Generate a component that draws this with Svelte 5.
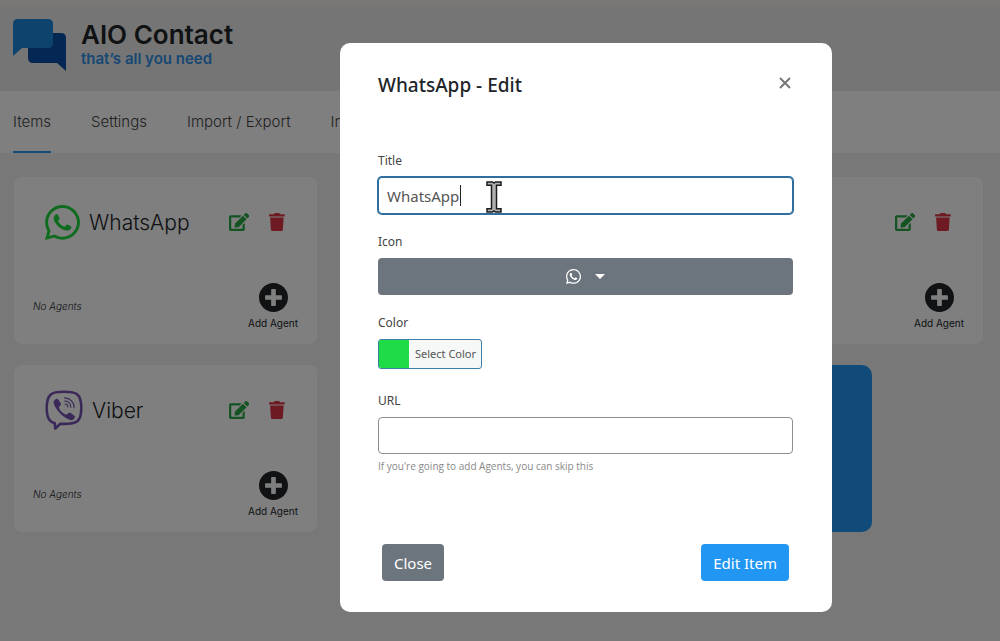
<script>
  const tabs = ["Items", "Settings", "Import / Export", "Info"];

  const items = [
    { title: "WhatsApp", icon: "whatsapp" },
    { title: "" },
    { title: "" },
    { title: "Viber", icon: "viber" },
    { title: "" },
  ];

  let activeTab = "Items";
  let open = true;
  let title = "WhatsApp";
  let url = "";
  let color = "#1fdb45";

  const close = () => (open = false);
</script>

{#snippet whatsapp()}
  <svg class="icon" viewBox="0 32 448 448" aria-hidden="true">
    <path d="M380.9 97.1C339 55.1 283.2 32 223.9 32c-122.4 0-222 99.6-222 222 0 39.1 10.2 77.3 29.6 111L0 480l117.7-30.9c32.4 17.7 68.9 27 106.1 27h.1c122.3 0 224.1-99.6 224.1-222 0-59.3-25.2-115-67.1-157zm-157 341.6c-33.2 0-65.7-8.9-94-25.7l-6.7-4-69.8 18.3L72 359.2l-4.4-7c-18.5-29.4-28.2-63.3-28.2-98.2 0-101.7 82.8-184.5 184.6-184.5 49.3 0 95.6 19.2 130.4 54.1 34.8 34.9 56.2 81.2 56.1 130.5 0 101.8-84.9 184.6-186.6 184.6zm101.2-138.2c-5.5-2.8-32.8-16.2-37.9-18-5.1-1.9-8.8-2.8-12.5 2.8-3.7 5.6-14.3 18-17.6 21.8-3.2 3.7-6.5 4.2-12 1.4-32.6-16.3-54-29.1-75.5-66-5.7-9.8 5.7-9.1 16.3-30.3 1.8-3.7.9-6.9-.5-9.7-1.4-2.8-12.5-30.1-17.1-41.2-4.5-10.8-9.1-9.3-12.5-9.5-3.2-.2-6.9-.2-10.6-.2-3.7 0-9.7 1.4-14.8 6.9-5.1 5.6-19.4 19-19.4 46.3 0 27.3 19.9 53.7 22.6 57.4 2.8 3.7 39.1 59.7 94.8 83.8 35.2 15.2 49 16.5 66.6 13.9 10.7-1.6 32.8-13.4 37.4-26.4 4.6-13 4.6-24.1 3.2-26.4-1.3-2.5-5-3.9-10.5-6.6z" />
  </svg>
{/snippet}

<main>
  <header>
    <svg class="logo" viewBox="0 0 54 54" aria-hidden="true">
      <path fill="#0a4fa8" d="M20 15h28q5 0 5 5v33l-9-8H20q-5 0-5-5V20q0-5 5-5z" />
      <path fill="#1b87d8" d="M5 1h30q5 0 5 5v19q0 5-5 5H9l-9 8V6q0-5 5-5z" />
    </svg>
    <div>
      <h1>AIO Contact</h1>
      <p>that’s all you need</p>
    </div>
  </header>

  <nav>
    {#each tabs as tab}
      <button class="tab" class:active={tab === activeTab} on:click={() => (activeTab = tab)}>{tab}</button>
    {/each}
  </nav>

  <section class="grid">
    {#each items as item}
      <article class="card">
        <div class="top">
          {#if item.icon === "whatsapp"}
            <span class="brand green">{@render whatsapp()}</span>
          {:else if item.icon === "viber"}
            <svg class="viber" viewBox="0 0 38 40" aria-hidden="true">
              <path fill="none" stroke="#7450b0" stroke-width="2.6" stroke-linejoin="round" d="M19 1.8c-6 0-10.6.4-13.2 2.6C2.6 7 1.7 11 1.7 18c0 7 1 11 4 13.3 1.2 1 2.5 1.5 4 1.8l.6 5.4 5-4.7c1.2.1 2.4.1 3.7.1 6 0 10.7-.5 13.4-2.7 3-2.4 3.9-6.4 3.9-13.2s-.9-11-4-13.5C29.6 2.3 25 1.8 19 1.8z" />
              <path fill="#7450b0" d="M10.5 9.3c1-.8 2.1-.5 2.9.5l2.2 3.1c.7 1.1.5 2-.4 2.7-1.3 1-1.4 1.7-.9 2.9 1.2 2.7 3.3 4.7 6 5.9 1.1.4 1.8.2 2.6-.8.8-1 1.8-1.2 2.9-.5l3.2 2.3c1.1.8 1.2 1.9.4 2.9-1.2 1.6-2.6 2.3-4.3 1.6C17.5 26.8 11.8 21 8.8 13.7c-.6-1.7.1-3.2 1.7-4.4z" />
              <path fill="none" stroke="#7450b0" stroke-width="1.2" stroke-linecap="round" d="M19.5 7.8c5.6.2 9.5 4 9.6 9.8M19.8 11c3.7.3 5.9 2.5 6.1 6.2M20.2 14c1.6.2 2.5 1.2 2.7 2.8" />
            </svg>
          {/if}
          <h2>{item.title}</h2>
          <button class="action edit" aria-label="Edit">
            <svg viewBox="0 0 576 512">
              <path d="M402.6 83.2l90.2 90.2c3.8 3.8 3.8 10 0 13.8L274.4 405.6l-92.8 10.3c-12.4 1.4-22.9-9.1-21.5-21.5l10.3-92.8L388.8 83.2c3.8-3.8 10-3.8 13.8 0zm162-22.9l-48.8-48.8c-15.2-15.2-39.9-15.2-55.2 0l-35.4 35.4c-3.8 3.8-3.8 10 0 13.8l90.2 90.2c3.8 3.8 10 3.8 13.8 0l35.4-35.4c15.2-15.3 15.2-40 0-55.2zM384 346.2V448H64V128h229.8c3.2 0 6.2-1.3 8.5-3.5l40-40c7.6-7.6 2.2-20.5-8.5-20.5H48C21.5 64 0 85.5 0 112v352c0 26.5 21.5 48 48 48h352c26.5 0 48-21.5 48-48V306.2c0-10.7-12.9-16-20.5-8.5l-40 40c-2.2 2.3-3.5 5.3-3.5 8.5z" />
            </svg>
          </button>
          <button class="action delete" aria-label="Delete">
            <svg viewBox="0 0 448 512">
              <path d="M432 32H312l-9.4-18.7A24 24 0 0 0 281.1 0H166.8a23.7 23.7 0 0 0-21.4 13.3L136 32H16A16 16 0 0 0 0 48v32a16 16 0 0 0 16 16h416a16 16 0 0 0 16-16V48a16 16 0 0 0-16-16zM32 128l21.2 339a48 48 0 0 0 47.9 45h245.8a48 48 0 0 0 47.9-45L416 128z" />
            </svg>
          </button>
        </div>
        <div class="bottom">
          <em>No Agents</em>
          <button class="add">
            <svg viewBox="8 8 496 496" aria-hidden="true">
              <path d="M256 8C119 8 8 119 8 256s111 248 248 248 248-111 248-248S393 8 256 8zm144 276c0 6.6-5.4 12-12 12h-92v92c0 6.6-5.4 12-12 12h-56c-6.6 0-12-5.4-12-12v-92h-92c-6.6 0-12-5.4-12-12v-56c0-6.6 5.4-12 12-12h92v-92c0-6.6 5.4-12 12-12h56c6.6 0 12 5.4 12 12v92h92c6.6 0 12 5.4 12 12v56z" />
            </svg>
            Add Agent
          </button>
        </div>
      </article>
    {/each}
    <button class="new" aria-label="Add item"></button>
  </section>
</main>

{#if open}
  <div class="backdrop">
    <form class="modal" role="dialog" aria-labelledby="modal-title" on:submit|preventDefault={close}>
      <div class="modal-header">
        <h3 id="modal-title">{title} - Edit</h3>
        <button type="button" class="x" aria-label="Dismiss" on:click={close}>
          <svg viewBox="0 0 12 12"><path d="M1 1l10 10m0-10l-10 10" /></svg>
        </button>
      </div>

      <div class="field">
        <label for="title">Title</label>
        <div class="input-wrap">
          <input id="title" class="input focused" type="text" bind:value={title} />
          <span class="caret"></span>
          <!-- text pointer -->
          <svg class="pointer" viewBox="0 0 16 32" aria-hidden="true">
            <path fill="#b0b0b0" stroke="#1c1c1c" stroke-width="1.5" d="M1 1h5.5L8 2l1.5-1H15v3.2h-4.500v23.600H15V31H9.500L8 30l-1.500 1H1v-3.200h4.500V4.200H1z" />
          </svg>
        </div>
      </div>

      <div class="field">
        <label for="icon">Icon</label>
        <button type="button" id="icon" class="dropdown" aria-label="WhatsApp icon">
          {@render whatsapp()}
          <span class="arrow"></span>
        </button>
      </div>

      <div class="field color">
        <label for="color">Color</label>
        <button type="button" id="color" class="picker">
          <span class="swatch" style="background: {color}"></span>
          <span class="picker-text">Select Color</span>
        </button>
      </div>

      <div class="field">
        <label for="url">URL</label>
        <input id="url" class="input" type="text" bind:value={url} />
        <small>If you're going to add Agents, you can skip this</small>
      </div>

      <div class="modal-footer">
        <button type="button" class="btn" on:click={close}>Close</button>
        <button type="submit" class="btn primary">Edit Item</button>
      </div>
    </form>
  </div>
{/if}

<style>
  :global(body) {
    background: #f0f0f0;
  }

  * {
    box-sizing: border-box;
  }

  button {
    border: none;
    padding: 0;
    background: none;
    font-family: inherit;
    cursor: pointer;
  }

  svg {
    display: block;
    fill: currentColor;
  }

  main {
    min-height: 100vh;
    background: #f0f0f0;
    color: #212529;
    font-family: Inter, "Open Sans", sans-serif;
  }

  /* HEADER */
  header {
    display: flex;
    gap: 14px;
    height: 91px;
    padding: 18px 13px 0;
    background: linear-gradient(#f6efe8, #ebebeb 12px);
  }

  .logo {
    width: 54px;
    height: 54px;
  }

  h1 {
    margin: 3px 0 0;
    font-size: 26px;
    line-height: 28px;
    font-weight: 600;
  }

  header p {
    margin: 0;
    color: #2f8fe6;
    font-size: 15px;
    line-height: 20px;
    font-weight: 600;
  }

  nav {
    display: flex;
    gap: 40px;
    height: 62px;
    padding: 0 13px;
    background: white;
  }

  .tab {
    border-bottom: 2px solid transparent;
    color: #444;
    font-size: 15px;
    font-weight: 300;
    white-space: nowrap;
  }

  .tab.active {
    border-color: #2196f3;
  }

  /* CARDS */
  .grid {
    display: grid;
    grid-template-columns: repeat(3, 1fr);
    gap: 21px 30px;
    padding: 24px 17px 24px 14px;
  }

  .card {
    height: 167px;
    border-radius: 8px;
    background: white;
  }

  .top {
    display: flex;
    align-items: center;
    height: 91px;
    margin: 0 32px 0 31px;
    border-bottom: 1px solid #fafafa;
  }

  .brand {
    width: 35px;
  }

  .green {
    color: #1fd93f;
  }

  .icon {
    width: 100%;
  }

  .viber {
    width: 38px;
    height: 40px;
  }

  h2 {
    flex: 1;
    margin: 0 0 0 9px;
    font-size: 21px;
    font-weight: 300;
  }

  .action {
    margin-left: 20px;
  }

  .action svg {
    height: 18px;
  }

  .edit {
    color: #28a745;
  }

  .delete {
    color: #dc3545;
  }

  .bottom {
    display: flex;
    justify-content: space-between;
    align-items: center;
    height: 76px;
    padding: 0 19px;
    font-size: 10px;
  }

  em {
    font-weight: 300;
  }

  .add {
    display: flex;
    flex-direction: column;
    align-items: center;
    gap: 5px;
    color: #212529;
    font-size: 10px;
    line-height: 12px;
  }

  .add svg {
    width: 29px;
    height: 29px;
  }

  .new {
    width: 192px;
    border-radius: 10px;
    background: #2196f3;
  }

  /* MODAL */
  .backdrop {
    position: fixed;
    inset: 0;
    display: flex;
    justify-content: center;
    align-items: flex-start;
    padding: 43px 0 0 172px;
    background: rgba(0, 0, 0, 0.5);
    color: #444;
    font-family: "Noto Sans", "Open Sans", sans-serif;
  }

  .modal {
    width: 492px;
    padding: 28px 39px 31px 38px;
    border-radius: 10px;
    background: white;
  }

  .modal-header {
    display: flex;
    justify-content: space-between;
    align-items: flex-start;
    margin-bottom: 54px;
  }

  h3 {
    margin: 0;
    color: #212529;
    font-size: 19px;
    line-height: 28px;
    font-weight: 500;
  }

  .x {
    padding: 6px 2px;
  }

  .x svg {
    width: 12px;
    height: 12px;
    fill: none;
    stroke: #777;
    stroke-width: 2;
  }

  .field {
    margin-bottom: 20px;
  }

  .color {
    margin-bottom: 24px;
  }

  label {
    display: block;
    margin-bottom: 8px;
    font-size: 12px;
    line-height: 16px;
  }

  .input-wrap {
    position: relative;
  }

  .input {
    display: block;
    width: 100%;
    height: 37px;
    padding: 0 8px;
    border: 1px solid #8c8f94;
    border-radius: 4px;
    outline: none;
    background: white;
    color: #555;
    font-family: inherit;
    font-size: 15px;
  }

  .focused {
    border-color: #2f6f9f;
    box-shadow: 0 0 0 1px #2f6f9f;
  }

  .caret {
    position: absolute;
    top: 8px;
    left: 82px;
    width: 1px;
    height: 21px;
    background: #222;
  }

  .pointer {
    position: absolute;
    top: 4px;
    left: 108px;
    width: 16px;
    height: 32px;
  }

  .dropdown {
    display: flex;
    justify-content: center;
    align-items: center;
    gap: 14px;
    width: 100%;
    height: 37px;
    border-radius: 4px;
    background: #6c757d;
    color: white;
  }

  .dropdown .icon {
    width: 15px;
  }

  .arrow {
    border: 5px solid transparent;
    border-top-color: white;
    border-bottom: none;
  }

  .picker {
    display: flex;
    height: 30px;
    border: 1px solid #3c7fa8;
    border-radius: 3px;
    overflow: hidden;
    background: #f6f7f7;
    color: #555;
  }

  .swatch {
    width: 30px;
    height: 28px;
  }

  .picker-text {
    padding: 0 5px 0 6px;
    font-size: 11px;
    line-height: 28px;
  }

  small {
    display: block;
    margin-top: 4px;
    color: #888;
    font-family: "Open Sans", sans-serif;
    font-size: 10px;
    line-height: 16px;
  }

  .modal-footer {
    display: flex;
    justify-content: space-between;
    margin-top: 70px;
    padding: 0 4px;
  }

  .btn {
    height: 37px;
    padding: 0 12px;
    border-radius: 4px;
    background: #6c757d;
    color: white;
    font-size: 15px;
  }

  .primary {
    background: #2196f3;
  }
</style>
